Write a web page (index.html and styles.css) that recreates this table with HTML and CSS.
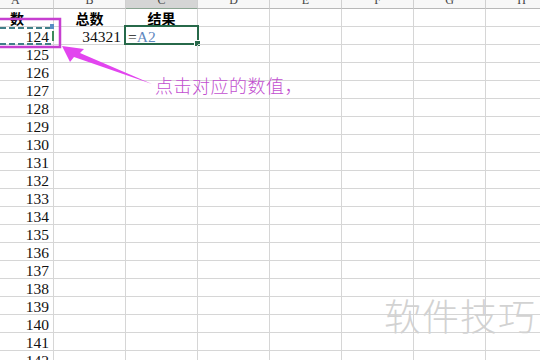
FILE: index.html
```html
<!DOCTYPE html>
<html lang="zh">
<head>
<meta charset="utf-8">
<link rel="stylesheet" href="styles.css">
</head>
<body>
<div class="page">
  <div class="sheet">
    <div class="row head">
      <div class="c a"><span class="hl hl-a">A</span></div>
      <div class="c"><span class="hl">B</span></div>
      <div class="c sel"><span class="hl">C</span></div>
      <div class="c"><span class="hl">D</span></div>
      <div class="c"><span class="hl">E</span></div>
      <div class="c"><span class="hl">F</span></div>
      <div class="c"><span class="hl">G</span></div>
      <div class="c"><span class="hl">H</span></div>
    </div>
    <div class="row">
      <div class="c a title title-a">数</div>
      <div class="c title">总数</div>
      <div class="c title">结果</div>
      <div class="c"></div><div class="c"></div><div class="c"></div><div class="c"></div><div class="c"></div>
    </div>
    <div class="row">
      <div class="c a num">124</div>
      <div class="c num">34321</div>
      <div class="c formula">=<span class="ref">A2</span><span class="selbox"><span class="handle"></span></span></div>
      <div class="c"></div><div class="c"></div><div class="c"></div><div class="c"></div><div class="c"></div>
    </div>
    <div class="row"><div class="c a num">125</div><div class="c"></div><div class="c"></div><div class="c"></div><div class="c"></div><div class="c"></div><div class="c"></div><div class="c"></div></div>
    <div class="row"><div class="c a num">126</div><div class="c"></div><div class="c"></div><div class="c"></div><div class="c"></div><div class="c"></div><div class="c"></div><div class="c"></div></div>
    <div class="row"><div class="c a num">127</div><div class="c"></div><div class="c"></div><div class="c"></div><div class="c"></div><div class="c"></div><div class="c"></div><div class="c"></div></div>
    <div class="row"><div class="c a num">128</div><div class="c"></div><div class="c"></div><div class="c"></div><div class="c"></div><div class="c"></div><div class="c"></div><div class="c"></div></div>
    <div class="row"><div class="c a num">129</div><div class="c"></div><div class="c"></div><div class="c"></div><div class="c"></div><div class="c"></div><div class="c"></div><div class="c"></div></div>
    <div class="row"><div class="c a num">130</div><div class="c"></div><div class="c"></div><div class="c"></div><div class="c"></div><div class="c"></div><div class="c"></div><div class="c"></div></div>
    <div class="row"><div class="c a num">131</div><div class="c"></div><div class="c"></div><div class="c"></div><div class="c"></div><div class="c"></div><div class="c"></div><div class="c"></div></div>
    <div class="row"><div class="c a num">132</div><div class="c"></div><div class="c"></div><div class="c"></div><div class="c"></div><div class="c"></div><div class="c"></div><div class="c"></div></div>
    <div class="row"><div class="c a num">133</div><div class="c"></div><div class="c"></div><div class="c"></div><div class="c"></div><div class="c"></div><div class="c"></div><div class="c"></div></div>
    <div class="row"><div class="c a num">134</div><div class="c"></div><div class="c"></div><div class="c"></div><div class="c"></div><div class="c"></div><div class="c"></div><div class="c"></div></div>
    <div class="row"><div class="c a num">135</div><div class="c"></div><div class="c"></div><div class="c"></div><div class="c"></div><div class="c"></div><div class="c"></div><div class="c"></div></div>
    <div class="row"><div class="c a num">136</div><div class="c"></div><div class="c"></div><div class="c"></div><div class="c"></div><div class="c"></div><div class="c"></div><div class="c"></div></div>
    <div class="row"><div class="c a num">137</div><div class="c"></div><div class="c"></div><div class="c"></div><div class="c"></div><div class="c"></div><div class="c"></div><div class="c"></div></div>
    <div class="row"><div class="c a num">138</div><div class="c"></div><div class="c"></div><div class="c"></div><div class="c"></div><div class="c"></div><div class="c"></div><div class="c"></div></div>
    <div class="row"><div class="c a num">139</div><div class="c"></div><div class="c"></div><div class="c"></div><div class="c"></div><div class="c"></div><div class="c"></div><div class="c"></div></div>
    <div class="row"><div class="c a num">140</div><div class="c"></div><div class="c"></div><div class="c"></div><div class="c"></div><div class="c"></div><div class="c"></div><div class="c"></div></div>
    <div class="row"><div class="c a num">141</div><div class="c"></div><div class="c"></div><div class="c"></div><div class="c"></div><div class="c"></div><div class="c"></div><div class="c"></div></div>
    <div class="row"><div class="c a num">142</div><div class="c"></div><div class="c"></div><div class="c"></div><div class="c"></div><div class="c"></div><div class="c"></div><div class="c"></div></div>
  </div>

  <svg class="marks" width="540" height="360" viewBox="0 0 540 360">
    <line x1="0" y1="28" x2="52" y2="28" stroke="#3f7f88" stroke-width="2" stroke-dasharray="6 3"/>
    <line x1="0" y1="44" x2="52" y2="44" stroke="#3f7f88" stroke-width="2" stroke-dasharray="6 3"/>
    <rect x="50" y="24" width="4" height="5" fill="#5a8ec4"/>
    <line x1="53" y1="31" x2="53" y2="41" stroke="#3d8a5a" stroke-width="2"/>
    <rect x="-6" y="19" width="66" height="28" fill="none" stroke="#c63fd0" stroke-width="2.5"/>
    <polygon points="62,46 84,49 80,53 152,84 74,57 70,62" fill="#e245ef"/>
  </svg>

  <div class="note">点击对应的数值，</div>
  <div class="watermark">软件技巧</div>
</div>
</body>
</html>
```

FILE: styles.css
```css
html, body {
  margin: 0;
  padding: 0;
  background: #ffffff;
  overflow: hidden;
}

.page {
  position: relative;
  width: 540px;
  height: 360px;
  overflow: hidden;
}

.sheet {
  display: flex;
  flex-direction: column;
  font-family: "Liberation Serif", "Noto Sans CJK SC", serif;
  color: #111;
}

.row {
  display: grid;
  grid-template-columns: 54px repeat(7, 72px);
  height: 18px;
  flex: none;
}

.c {
  box-sizing: border-box;
  border-right: 1px solid #d6d6d6;
  border-bottom: 1px solid #d6d6d6;
  height: 18px;
  position: relative;
  white-space: nowrap;
}

.head {
  height: 9px;
}

.head .c {
  height: 9px;
  overflow: hidden;
  text-align: center;
  background: #f7f7f7;
  border-bottom: 1px solid #b8b8b8;
  border-right: 1px solid #d0d0d0;
}

.head .c.sel {
  background: #d5d5d5;
  border-bottom: 1px solid #8aa391;
}

.hl {
  display: block;
  margin-top: -7px;
  font-family: "Liberation Serif", serif;
  font-size: 12px;
  line-height: 14px;
  color: #444;
}

.hl-a {
  text-align: left;
  padding-left: 11px;
}

.title {
  font-family: "Noto Sans CJK SC", sans-serif;
  font-weight: 700;
  font-size: 14px;
  line-height: 18px;
  text-align: center;
  color: #000;
}

.title-a {
  text-align: left;
  padding-left: 10px;
}

.num {
  text-align: right;
  padding-right: 4px;
  font-size: 15.5px;
  line-height: 19px;
}

.formula {
  font-size: 15.5px;
  line-height: 19px;
  padding-left: 2px;
}

.ref {
  color: #5f88c0;
}

.selbox {
  position: absolute;
  left: -2px;
  top: -2px;
  right: -2px;
  bottom: -1px;
  border: 2px solid #27694a;
}

.handle {
  position: absolute;
  right: -4px;
  bottom: -4px;
  width: 5px;
  height: 5px;
  background: #27694a;
  border: 1px solid #fff;
}

.marks {
  position: absolute;
  left: 0;
  top: 0;
  pointer-events: none;
}

.note {
  position: absolute;
  left: 155px;
  top: 73px;
  font-family: "Noto Sans CJK SC", sans-serif;
  font-weight: 300;
  font-size: 18px;
  line-height: 24px;
  color: #c24fd0;
  letter-spacing: 0.5px;
}

.watermark {
  position: absolute;
  left: 384px;
  top: 290px;
  font-family: "Noto Sans CJK SC", sans-serif;
  font-weight: 300;
  font-size: 37px;
  line-height: 50px;
  color: #d2d2d2;
  letter-spacing: 1px;
}
```
